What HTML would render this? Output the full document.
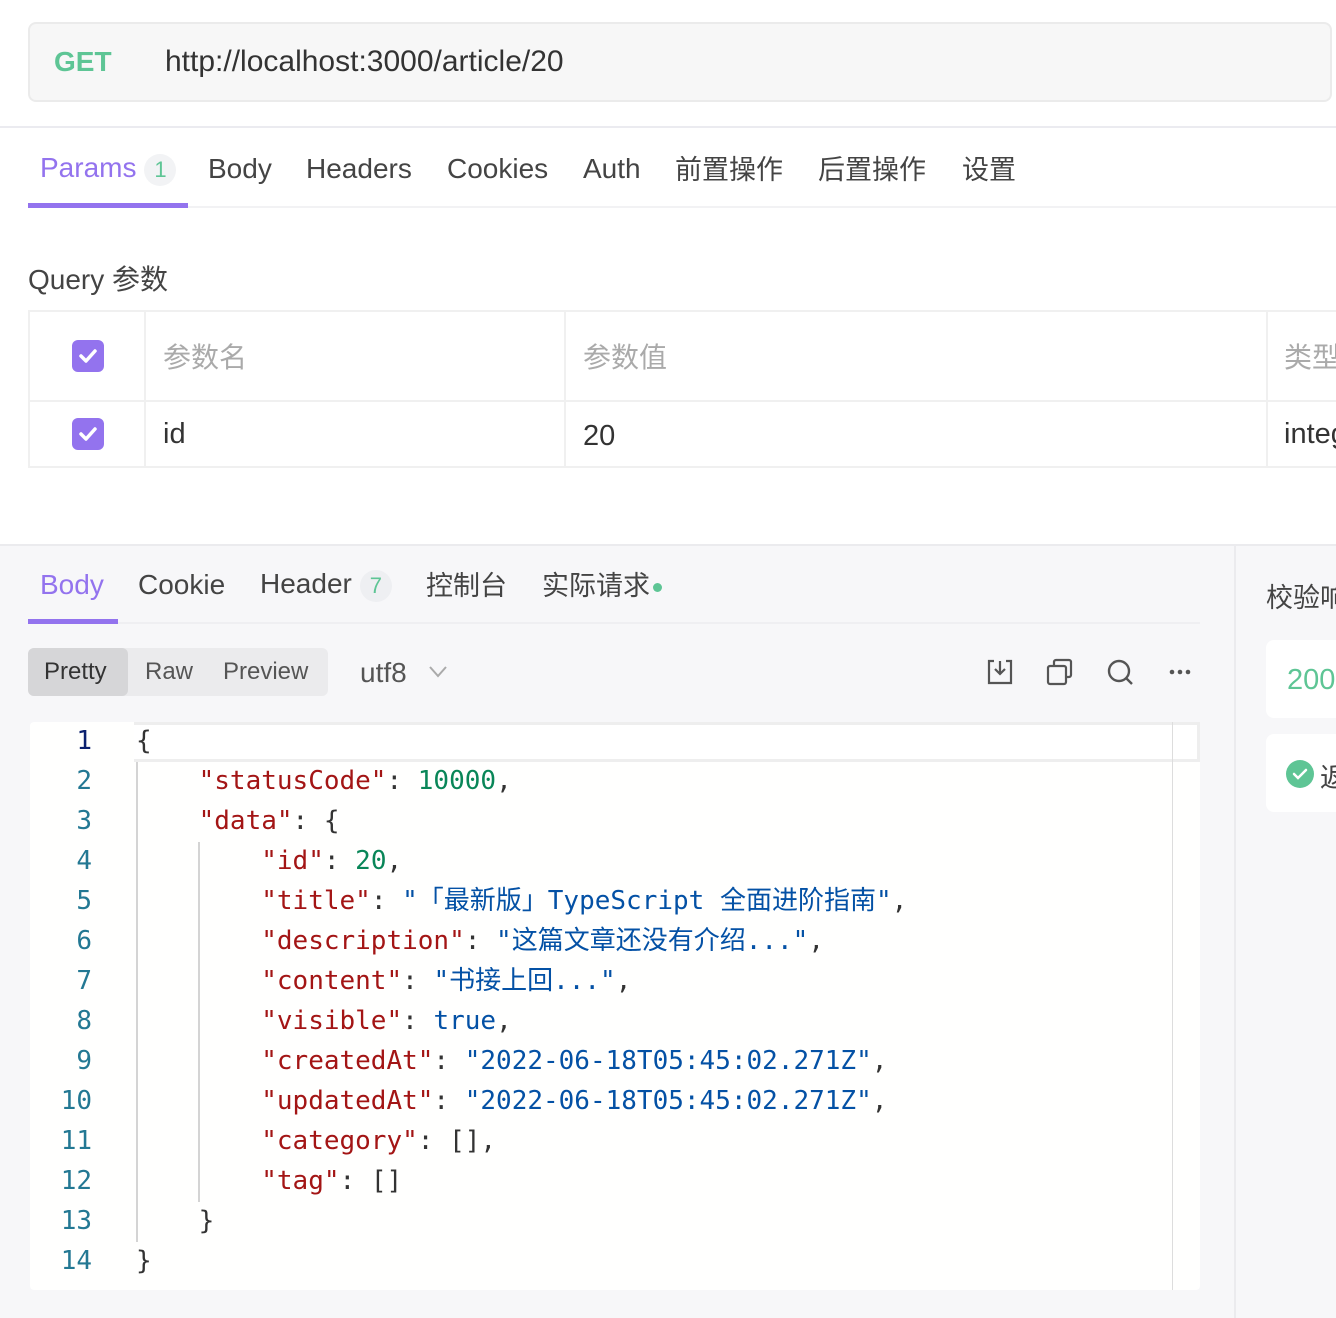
<!DOCTYPE html>
<html><head><meta charset="utf-8"><style>
*{margin:0;padding:0;box-sizing:border-box}
body{width:1336px;height:1318px;overflow:hidden;background:#fff;position:relative;font-family:"Liberation Sans","Noto Sans CJK SC",sans-serif;color:#333}
.a{position:absolute;white-space:nowrap}
.tab{font-size:27px;color:#444}
.badge{display:inline-block;width:32px;height:32px;border-radius:16px;background:#f2f3f5;color:#5ec595;font-size:22px;text-align:center;line-height:32px;vertical-align:middle;margin-left:8px}
.cb{position:absolute;width:32px;height:32px;border-radius:6px;background:#9373ee}
.code{font-family:"DejaVu Sans Mono","Liberation Mono","Noto Sans CJK SC",monospace;font-size:26px;line-height:40px}
.ln{position:absolute;width:62px;text-align:right;left:30px;color:#237893}
.k{color:#a31515}.n{color:#098658}.s{color:#0451a5}
pre.a{white-space:pre}
</style></head><body>
<div class="a" style="left:28px;top:22px;width:1304px;height:80px;background:#f7f7f7;border:2px solid #ebebeb;border-radius:8px"></div>
<div class="a" style="left:54px;top:46px;font-size:28px;font-weight:bold;color:#5ec595">GET</div>
<div class="a" style="left:165px;top:45px;font-size:30px;color:#333">http://localhost:3000/article/20</div>
<div class="a" style="left:0;top:126px;width:1336px;height:2px;background:#ebebf0"></div>
<div class="a tab" style="left:40px;top:152px;color:#9373ee;font-size:28px">Params<span class="badge">1</span></div>
<div class="a tab" style="left:208px;top:153px;font-size:28px">Body</div>
<div class="a tab" style="left:306px;top:153px;font-size:28px">Headers</div>
<div class="a tab" style="left:447px;top:153px;font-size:28px">Cookies</div>
<div class="a tab" style="left:583px;top:153px;font-size:28px">Auth</div>
<div class="a tab" style="left:675px;top:148px">前置操作</div>
<div class="a tab" style="left:818px;top:148px">后置操作</div>
<div class="a tab" style="left:962px;top:148px">设置</div>
<div class="a" style="left:28px;top:206px;width:1308px;height:2px;background:#f2f2f4"></div>
<div class="a" style="left:28px;top:203px;width:160px;height:5px;background:#9373ee"></div>
<div class="a" style="left:28px;top:258px;font-size:28px;color:#444">Query 参数</div>
<div class="a" style="left:28px;top:310px;width:1320px;height:158px;border:2px solid #f0f0f0"></div>
<div class="a" style="left:28px;top:400px;width:1320px;height:2px;background:#f0f0f0"></div>
<div class="a" style="left:144px;top:310px;width:2px;height:158px;background:#f0f0f0"></div>
<div class="a" style="left:564px;top:310px;width:2px;height:158px;background:#f0f0f0"></div>
<div class="a" style="left:1266px;top:310px;width:2px;height:158px;background:#f0f0f0"></div>
<div class="cb" style="left:72px;top:340px"><svg width="32" height="32"><path d="M9 16l5 5 9-10" stroke="#fff" stroke-width="3.5" fill="none" stroke-linecap="round" stroke-linejoin="round"/></svg></div>
<div class="cb" style="left:72px;top:418px"><svg width="32" height="32"><path d="M9 16l5 5 9-10" stroke="#fff" stroke-width="3.5" fill="none" stroke-linecap="round" stroke-linejoin="round"/></svg></div>
<div class="a" style="left:163px;top:336px;font-size:28px;color:#aaa">参数名</div>
<div class="a" style="left:583px;top:336px;font-size:28px;color:#aaa">参数值</div>
<div class="a" style="left:1284px;top:336px;font-size:28px;color:#aaa">类型</div>
<div class="a" style="left:163px;top:418px;font-size:29px;color:#333">id</div>
<div class="a" style="left:583px;top:420px;font-size:29px;color:#333">20</div>
<div class="a" style="left:1284px;top:418px;font-size:29px;color:#333">integer</div>
<div class="a" style="left:0;top:544px;width:1336px;height:774px;background:#f7f7f9;border-top:2px solid #ebebee"></div>
<div class="a" style="left:1234px;top:546px;width:2px;height:772px;background:#ebebee"></div>
<div class="a tab" style="left:40px;top:569px;color:#9373ee;font-size:28px">Body</div>
<div class="a tab" style="left:138px;top:569px;font-size:28px">Cookie</div>
<div class="a tab" style="left:260px;top:568px;font-size:28px">Header<span class="badge" style="background:#eeeff2">7</span></div>
<div class="a tab" style="left:426px;top:564px">控制台</div>
<div class="a tab" style="left:542px;top:564px">实际请求<span style="display:inline-block;width:9px;height:9px;border-radius:5px;background:#5ec595;vertical-align:middle;margin-left:3px"></span></div>
<div class="a" style="left:28px;top:622px;width:1172px;height:2px;background:#efeff2"></div>
<div class="a" style="left:28px;top:619px;width:90px;height:5px;background:#9373ee"></div>
<div class="a" style="left:28px;top:648px;width:300px;height:48px;background:#ebebed;border-radius:6px"></div>
<div class="a" style="left:28px;top:648px;width:100px;height:48px;background:#d6d6d8;border-radius:6px"></div>
<div class="a" style="left:44px;top:658px;font-size:24px;color:#333">Pretty</div>
<div class="a" style="left:145px;top:658px;font-size:24px;color:#555">Raw</div>
<div class="a" style="left:223px;top:658px;font-size:24px;color:#555">Preview</div>
<div class="a" style="left:360px;top:657px;font-size:28px;color:#555">utf8</div>
<svg class="a" style="left:428px;top:662px" width="20" height="20"><path d="M2 5l8 9 8-9" stroke="#aaa" stroke-width="2" fill="none"/></svg>
<svg class="a" style="left:984px;top:656px" width="32" height="32" fill="none" stroke="#555" stroke-width="2.2"><path d="M10 5H5v22h22V5h-5"/><path d="M16 5v12M11 13l5 5 5-5"/></svg>
<svg class="a" style="left:1044px;top:656px" width="32" height="32" fill="none" stroke="#555" stroke-width="2.2"><rect x="4" y="10" width="18" height="18" rx="2"/><path d="M10 10V6a2 2 0 0 1 2-2h13a2 2 0 0 1 2 2v13a2 2 0 0 1-2 2h-3"/></svg>
<svg class="a" style="left:1104px;top:656px" width="32" height="32" fill="none" stroke="#555" stroke-width="2.4"><circle cx="15" cy="15" r="10"/><path d="M22 22l6 6"/></svg>
<svg class="a" style="left:1166px;top:664px" width="30" height="16" fill="#555"><circle cx="6" cy="8" r="2.3"/><circle cx="14" cy="8" r="2.3"/><circle cx="22" cy="8" r="2.3"/></svg>
<div class="a" style="left:1266px;top:576px;font-size:27px;color:#444">校验响应</div>
<div class="a" style="left:1266px;top:640px;width:100px;height:78px;background:#fff;border-radius:8px"></div>
<div class="a" style="left:1287px;top:664px;font-size:29px;color:#5ec595">200</div>
<div class="a" style="left:1266px;top:734px;width:100px;height:78px;background:#fff;border-radius:8px"></div>
<div class="a" style="left:1286px;top:760px;width:28px;height:28px;border-radius:14px;background:#5ec595"><svg width="28" height="28"><path d="M8 14l4 4 8-8" stroke="#fff" stroke-width="2.5" fill="none" stroke-linecap="round"/></svg></div>
<div class="a" style="left:1320px;top:756px;font-size:27px;color:#444">返回</div>
<div class="a" style="left:30px;top:722px;width:1170px;height:568px;background:#fffffe;border-radius:4px"></div>
<div class="a" style="left:134px;top:722px;width:1066px;height:40px;border:3px solid #eeeeee;border-left:none;background:#fff"></div>
<div class="a" style="left:1172px;top:722px;width:1px;height:568px;background:#ddd"></div>
<div class="a" style="left:136px;top:762px;width:2px;height:480px;background:#d4d4d4"></div>
<div class="a" style="left:198px;top:842px;width:2px;height:360px;background:#d4d4d4"></div>
<div class="code">
<div class="ln a" style="top:721px;color:#0b216f">1</div>
<div class="ln a" style="top:761px">2</div>
<div class="ln a" style="top:801px">3</div>
<div class="ln a" style="top:841px">4</div>
<div class="ln a" style="top:881px">5</div>
<div class="ln a" style="top:921px">6</div>
<div class="ln a" style="top:961px">7</div>
<div class="ln a" style="top:1001px">8</div>
<div class="ln a" style="top:1041px">9</div>
<div class="ln a" style="top:1081px">10</div>
<div class="ln a" style="top:1121px">11</div>
<div class="ln a" style="top:1161px">12</div>
<div class="ln a" style="top:1201px">13</div>
<div class="ln a" style="top:1241px">14</div>
<pre class="a code" style="left:136px;top:721px">{
    <span class="k">"statusCode"</span>: <span class="n">10000</span>,
    <span class="k">"data"</span>: {
        <span class="k">"id"</span>: <span class="n">20</span>,
        <span class="k">"title"</span>: <span class="s">"「最新版」TypeScript 全面进阶指南"</span>,
        <span class="k">"description"</span>: <span class="s">"这篇文章还没有介绍..."</span>,
        <span class="k">"content"</span>: <span class="s">"书接上回..."</span>,
        <span class="k">"visible"</span>: <span class="s">true</span>,
        <span class="k">"createdAt"</span>: <span class="s">"2022-06-18T05:45:02.271Z"</span>,
        <span class="k">"updatedAt"</span>: <span class="s">"2022-06-18T05:45:02.271Z"</span>,
        <span class="k">"category"</span>: [],
        <span class="k">"tag"</span>: []
    }
}</pre>
</div>
</body></html>
